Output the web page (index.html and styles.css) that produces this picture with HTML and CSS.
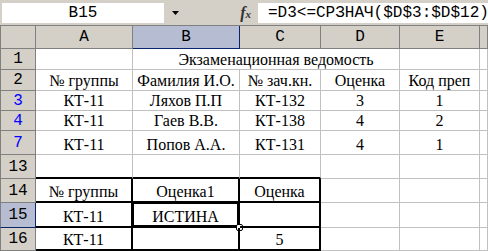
FILE: index.html
```html
<!DOCTYPE html>
<html>
<head>
<meta charset="utf-8">
<link rel="stylesheet" href="styles.css">
</head>
<body>
<div class="fbar">
  <div class="namebox">B15</div>
  <div class="nbarrow"><svg width="7" height="4" viewBox="0 0 7 4"><path d="M0 0H7L3.5 4Z" fill="#000"/></svg></div>
  <div class="fxwrap"><span class="fx">f<span class="fxx">x</span></span></div>
  <div class="formula">=D3&lt;=СРЗНАЧ($D$3:$D$12)</div>
</div>
<div class="sheet">
  <div class="h corner"></div>
  <div class="h">A</div>
  <div class="h selh">B</div>
  <div class="h">C</div>
  <div class="h">D</div>
  <div class="h">E</div>
  <div class="h last"></div>

  <div class="rh">1</div>
  <div class="c"></div>
  <div class="c title">Экзаменационная ведомость</div>
  <div class="c"></div>
  <div class="c"></div>

  <div class="rh">2</div>
  <div class="c">№ группы</div>
  <div class="c">Фамилия И.О.</div>
  <div class="c">№ зач.кн.</div>
  <div class="c">Оценка</div>
  <div class="c">Код преп</div>
  <div class="c"></div>

  <div class="rh blue">3</div>
  <div class="c">КТ-11</div>
  <div class="c">Ляхов П.П</div>
  <div class="c">КТ-132</div>
  <div class="c">3</div>
  <div class="c">1</div>
  <div class="c"></div>

  <div class="rh blue">4</div>
  <div class="c">КТ-11</div>
  <div class="c">Гаев В.В.</div>
  <div class="c">КТ-138</div>
  <div class="c">4</div>
  <div class="c">2</div>
  <div class="c"></div>

  <div class="rh blue">7</div>
  <div class="c">КТ-11</div>
  <div class="c">Попов А.А.</div>
  <div class="c">КТ-131</div>
  <div class="c">4</div>
  <div class="c">1</div>
  <div class="c"></div>

  <div class="rh">13</div>
  <div class="c tb"></div>
  <div class="c tb"></div>
  <div class="c tb"></div>
  <div class="c"></div>
  <div class="c"></div>
  <div class="c"></div>

  <div class="rh">14</div>
  <div class="c tk">№ группы</div>
  <div class="c tk">Оценка1</div>
  <div class="c tk">Оценка</div>
  <div class="c"></div>
  <div class="c"></div>
  <div class="c"></div>

  <div class="rh selr">15</div>
  <div class="c tk">КТ-11</div>
  <div class="c tk active">ИСТИНА<span class="selbox"></span><span class="handle"></span></div>
  <div class="c tk"></div>
  <div class="c"></div>
  <div class="c"></div>
  <div class="c"></div>

  <div class="rh">16</div>
  <div class="c tk">КТ-11</div>
  <div class="c tk"></div>
  <div class="c tk">5</div>
  <div class="c"></div>
  <div class="c"></div>
  <div class="c"></div>
</div>
</body>
</html>
```
FILE: styles.css
```css
html, body {
  margin: 0;
  padding: 0;
}
body {
  width: 488px;
  height: 251px;
  overflow: hidden;
  background: #d4d0c8;
  font-family: "Liberation Serif", "Times New Roman", serif;
  font-size: 16px;
  color: #000;
}
.fbar {
  display: flex;
  height: 25px;
  box-sizing: border-box;
  padding-top: 3px;
  padding-bottom: 2px;
}
.namebox {
  margin-left: 2px;
  width: 162px;
  background: #fff;
  font-family: "Liberation Mono", "Courier New", monospace;
  font-size: 16px;
  line-height: 20px;
  text-align: center;
}
.nbarrow {
  width: 20px;
  display: flex;
  align-items: center;
  justify-content: center;
  padding-left: 1px;
}
.fxwrap {
  width: 73px;
  display: flex;
  justify-content: flex-end;
  align-items: center;
  padding-right: 7px;
  box-sizing: border-box;
}
.fx {
  font-family: "Liberation Serif", serif;
  font-style: italic;
  font-weight: bold;
  font-size: 16px;
  line-height: 16px;
  color: #333;
}
.fxx {
  font-size: 11px;
}
.formula {
  flex: 1;
  background: #fff;
  font-family: "Liberation Mono", "Courier New", monospace;
  font-size: 16px;
  line-height: 20px;
  padding-left: 10px;
  white-space: nowrap;
  overflow: hidden;
}
.sheet {
  display: grid;
  grid-template-columns: 36px 97px 107px 81px 79px 80px 8px;
  grid-template-rows: 23px 21px 21px 20px 20px 24px 24px 24px 25px 23px;
  border-top: 1px solid #808080;
  background: #fff;
}
.h, .rh {
  background: #d4d0c8;
  box-sizing: border-box;
  border-right: 1px solid #808080;
  border-bottom: 1px solid #808080;
  font-family: "Liberation Mono", "Courier New", monospace;
  font-size: 16px;
  display: flex;
  align-items: center;
  justify-content: center;
}
.rh, .corner {
  border-left: 1px solid #808080;
}
.selh, .selr {
  background: #b6bdd2;
  border-bottom: 1px solid #0a246a;
  border-right: 1px solid #0a246a;
}
.blue {
  color: #0000ff;
}
.c {
  box-sizing: border-box;
  border-right: 1px solid #c0c0c0;
  border-bottom: 1px solid #c0c0c0;
  display: flex;
  align-items: flex-end;
  justify-content: center;
  line-height: 19px;
  white-space: nowrap;
  position: relative;
}
.title {
  grid-column: 3 / 6;
  padding-left: 20px;
}
.tb {
  border-bottom: 2px solid #000;
}
.tk {
  border-bottom: 2px solid #000;
  border-right: 2px solid #000;
}
.selbox {
  position: absolute;
  left: -1px;
  top: -1px;
  right: -1px;
  bottom: -1px;
  border: 2px solid #000;
}
.handle {
  position: absolute;
  right: -5px;
  bottom: -5px;
  width: 5px;
  height: 5px;
  background: #fff;
  border: 1px solid #000;
  border-radius: 2px;
}
```
